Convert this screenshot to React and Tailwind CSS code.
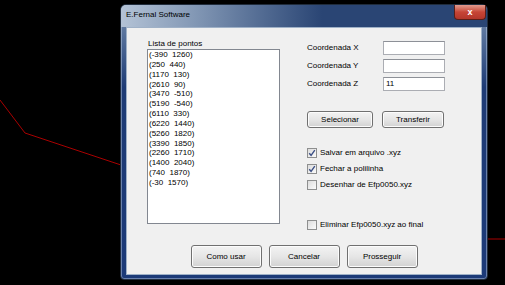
import React from 'react';

const points = [
  '(-390  1260)',
  '(250  440)',
  '(1170  130)',
  '(2610  90)',
  '(3470  -510)',
  '(5190  -540)',
  '(6110  330)',
  '(6220  1440)',
  '(5260  1820)',
  '(3390  1850)',
  '(2260  1710)',
  '(1400  2040)',
  '(740  1870)',
  '(-30  1570)',
];

function WinButton({ children, className = '' }) {
  return (
    <button
      className={`flex items-center justify-center rounded-[3px] border border-[#707070] bg-gradient-to-b from-[#f3f3f3] via-[#e6e6e6] to-[#d2d2d2] text-[8px] leading-none text-black shadow-[inset_0_0_0_1px_#fcfcfc] ${className}`}
    >
      {children}
    </button>
  );
}

function Check({ checked, label }) {
  return (
    <div className="flex h-[10px] items-center">
      <div className="flex h-[10px] w-[10px] items-center justify-center border border-[#8e8f8f] bg-gradient-to-br from-[#dcdcdc] to-[#fbfbfb]">
        {checked && (
          <svg width="8" height="8" viewBox="0 0 8 8">
            <path d="M1.2 4.2 L3.1 6.3 L6.8 1.2" fill="none" stroke="#3b4f86" strokeWidth="1.4" />
          </svg>
        )}
      </div>
      <span className="ml-[3px] text-[8px] leading-none text-black">{label}</span>
    </div>
  );
}

function Field({ label, value = '' }) {
  return (
    <div className="flex h-[14px] items-center">
      <span className="w-[76px] text-[8px] leading-none text-black">{label}</span>
      <div className="flex h-[14px] w-[62px] items-center border border-[#abadb3] border-t-[#8d9097] bg-white pl-[2px] text-[8px] leading-none text-black">
        {value}
      </div>
    </div>
  );
}

export default function App() {
  return (
    <div className="relative h-[285px] w-[505px] overflow-hidden bg-black font-['Liberation_Sans',Arial,sans-serif]">
      {/* desenho ao fundo */}
      <svg className="absolute inset-0" width="505" height="285">
        <polyline points="0,100 25,133 121,165" fill="none" stroke="#a80000" strokeWidth="1" />
        <line x1="487" y1="239" x2="505" y2="239" stroke="#a80000" strokeWidth="1" />
      </svg>

      {/* janela */}
      <div className="absolute left-[120px] top-[4px] flex h-[276px] w-[368px] flex-col rounded-t-[6px] rounded-b-[4px] border border-[#202c3c] bg-gradient-to-b from-[#7a91b0] via-[#1e3b75] via-30% to-[#1c3a78] shadow-[inset_0_0_0_1px_rgba(200,215,235,0.45)]">
        <div className="flex h-[22px] items-start rounded-t-[5px] bg-gradient-to-r from-[#b4c3d6] via-[#8398b5] via-20% to-[#2a4574] to-55%">
          <span className="ml-[5px] mt-[6px] text-[8px] leading-none text-[#000]">E.Fernal Software</span>
          <div className="ml-auto mr-[1px] flex h-[15px] w-[32px] items-center justify-center rounded-b-[4px] border border-t-0 border-[#5a1e18] bg-gradient-to-b from-[#e09a8f] via-[#c74536] to-[#b3362a]">
            <span className="text-[9px] font-bold leading-none text-white">x</span>
          </div>
        </div>

        <div className="mx-[5px] mb-[4px] flex flex-1 flex-col border border-[#9fb1c7] bg-[#f0f0f0]">
          <div className="flex">
            <div className="ml-[20px] mt-[10px] flex w-[133px] flex-col">
              <span className="h-[11px] pl-[1px] text-[8px] leading-[11px] text-black">Lista de pontos</span>
              <div className="h-[175px] border border-[#828790] bg-white pl-[1px]">
                {points.map((p) => (
                  <div key={p} className="whitespace-pre text-[8px] leading-[9.85px] text-black">
                    {p}
                  </div>
                ))}
              </div>
            </div>

            <div className="ml-[27px] mt-[13px] flex flex-col">
              <div className="flex flex-col gap-[4px]">
                <Field label="Coordenada X" />
                <Field label="Coordenada Y" />
                <Field label="Coordenada Z" value="11" />
              </div>
              <div className="mt-[20px] flex gap-[9px]">
                <WinButton className="h-[17px] w-[66px]">Selecionar</WinButton>
                <WinButton className="h-[17px] w-[62px]">Transferir</WinButton>
              </div>
              <div className="mt-[20px] flex flex-col gap-[6px]">
                <Check checked label="Salvar em arquivo .xyz" />
                <Check checked label="Fechar a polilinha" />
                <Check label="Desenhar de Efp0050.xyz" />
              </div>
              <div className="mt-[30px]">
                <Check label="Eliminar Efp0050.xyz ao final" />
              </div>
            </div>
          </div>

          <div className="mb-[6px] mt-auto flex justify-center gap-[7px]">
            <WinButton className="h-[23px] w-[71px]">Como usar</WinButton>
            <WinButton className="h-[23px] w-[71px]">Cancelar</WinButton>
            <WinButton className="h-[23px] w-[71px]">Prosseguir</WinButton>
          </div>
        </div>
      </div>
    </div>
  );
}
